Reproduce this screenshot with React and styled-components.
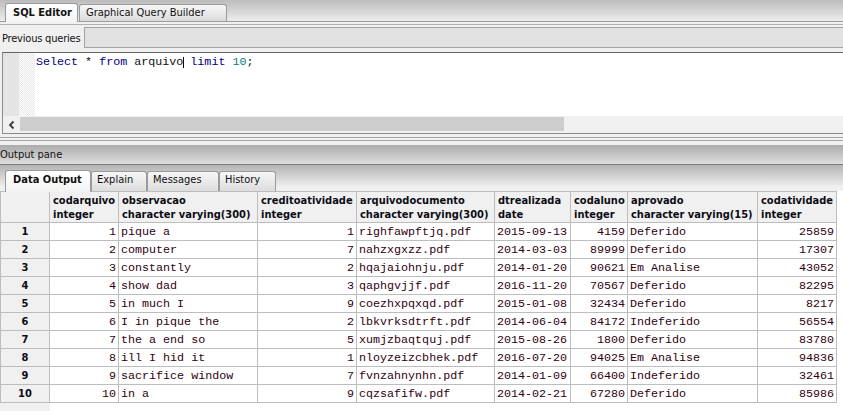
import React from "react";
import styled, { createGlobalStyle } from "styled-components";

const UI = `"DejaVu Sans Condensed", "DejaVu Sans", sans-serif`;
const MONO = `"Liberation Mono", "Courier New", monospace`;

const GlobalStyle = createGlobalStyle`
  html, body { margin: 0; padding: 0; background: #fff; overflow: hidden; }
  body { font-family: ${UI}; font-size: 11px; color: #000; }
`;

const Window = styled.div`
  width: 843px;
  height: 411px;
  display: flex;
  flex-direction: column;
  background: #f0f0f0;
  overflow: hidden;
`;

const TabBar = styled.div`
  flex: none;
  box-sizing: border-box;
  height: ${(p) => p.$h}px;
  display: flex;
  align-items: flex-end;
  gap: ${(p) => p.$gap}px;
  padding-left: 5px;
  background: ${(p) => p.$bg};
`;

const Tab = styled.div`
  box-sizing: border-box;
  flex: none;
  width: ${(p) => p.$w}px;
  height: ${(p) => p.$h}px;
  margin-bottom: ${(p) => (p.$active ? -1 : 0)}px;
  position: relative;
  z-index: ${(p) => (p.$active ? 2 : 1)};
  border: 1px solid #9a9a9a;
  border-bottom: none;
  border-radius: 3px 3px 0 0;
  background: ${(p) =>
    p.$active
      ? "linear-gradient(#ffffff, #f3f3f3)"
      : "linear-gradient(#f7f7f7, #dcdcdc)"};
  font-weight: ${(p) => (p.$active ? 700 : 400)};
  padding-left: ${(p) => p.$pad}px;
  line-height: ${(p) => p.$lh}px;
  white-space: nowrap;
  color: #111;
`;

const PanelTop = styled.div`
  flex: none;
  height: 6px;
  box-sizing: border-box;
  border-top: 1px solid #9c9c9c;
  padding-top: 2px;
`;

const PanelInnerLine = styled.div`
  border-top: 1px solid #b0b0b0;
`;

const QueryRow = styled.div`
  flex: none;
  height: 21px;
  display: flex;
`;

const QueryLabel = styled.div`
  width: 84px;
  flex: none;
  padding: 2px 0 0 2px;
  box-sizing: border-box;
  line-height: 19px;
  letter-spacing: -0.2px;
  white-space: nowrap;
  color: #111;
`;

const QueryCombo = styled.div`
  flex: 1;
  box-sizing: border-box;
  border: 1px solid #a4a4a4;
  border-right: none;
  background: #e1e1e1;
`;

const Editor = styled.div`
  flex: none;
  height: 82px;
  box-sizing: border-box;
  margin: 4px 0 0 2px;
  border-top: 1px solid #656565;
  border-left: 1px solid #8c8c8c;
  border-bottom: 1px solid #8a8a8a;
  background: #fff;
  display: flex;
  flex-direction: column;
`;

const EditorBody = styled.div`
  flex: 1;
  display: flex;
`;

const Gutter = styled.div`
  width: 16px;
  flex: none;
  background: #e4e4e4;
`;

const FoldMargin = styled.div`
  width: 16px;
  flex: none;
  background-color: #fff;
  background-image: repeating-conic-gradient(#e8e8e8 0 25%, #ffffff 0 50%);
  background-size: 2px 2px;
`;

const Code = styled.div`
  flex: 1;
  padding: 2px 0 0 1px;
  font-family: ${MONO};
  font-size: 11.7px;
  line-height: 14px;
  white-space: pre;
  color: #101010;
`;

const Token = styled.span`
  color: ${(p) => p.$c};
`;

const Caret = styled.span`
  display: inline-block;
  width: 0;
  height: 11px;
  border-left: 1px solid #000;
  margin-right: -1px;
  vertical-align: -3px;
`;

const HScroll = styled.div`
  flex: none;
  height: 17px;
  display: flex;
  background: #f0f0f0;
`;

const ScrollButton = styled.div`
  width: 17px;
  flex: none;
  display: flex;
  align-items: center;
  justify-content: center;
`;

const ScrollThumb = styled.div`
  width: 544px;
  flex: none;
  margin: 1px 0 2px;
  background: #cdcdcd;
`;

const Splitter = styled.div`
  flex: none;
  height: 11px;
  background: linear-gradient(
    to bottom,
    #f0f0f0 0 3px,
    #a6a6a6 3px 4px,
    #f0f0f0 4px 6px,
    #a6a6a6 6px 7px,
    #f0f0f0 7px
  );
`;

const OutputHeader = styled.div`
  flex: none;
  height: 20px;
  box-sizing: border-box;
  border-bottom: 1px solid #7a7a7a;
  background: linear-gradient(#ababab, #dedede);
  line-height: 19px;
  white-space: nowrap;
  color: #111;
`;

const DataGrid = styled.div`
  flex: 1;
  display: grid;
  grid-template-columns: ${(p) => p.$cols.map((c) => c + "px").join(" ")};
  grid-template-rows: 32px repeat(10, 18px) 1fr;
  background: #fff;
`;

const HeaderCell = styled.div`
  box-sizing: border-box;
  background: #f0f0f0;
  border-top: 1px solid #bdbdbd;
  border-right: 1px solid #bdbdbd;
  border-bottom: 1px solid #bdbdbd;
  border-left: ${(p) => (p.$first ? "1px solid #bdbdbd" : "none")};
  padding: 2px 0 0 3px;
  font-weight: 700;
  line-height: 13.5px;
  white-space: nowrap;
  overflow: hidden;
  color: #0c0c14;
`;

const RowHead = styled.div`
  box-sizing: border-box;
  background: #f0f0f0;
  border-left: 1px solid #bdbdbd;
  border-right: 1px solid #bdbdbd;
  border-bottom: 1px solid #bdbdbd;
  font-weight: 700;
  text-align: center;
  line-height: 17px;
  color: #0c0c14;
`;

const Cell = styled.div`
  box-sizing: border-box;
  border-right: 1px solid #bdbdbd;
  border-bottom: 1px solid #bdbdbd;
  padding: 1px 2px 0 2px;
  text-align: ${(p) => (p.$num ? "right" : "left")};
  font-family: ${MONO};
  font-size: 11.7px;
  line-height: 16px;
  white-space: nowrap;
  overflow: hidden;
  color: #300010;
`;

const Filler = styled.div`
  grid-column: 1;
  background: #f0f0f0;
`;

const COLS = [50, 69, 139, 99, 138, 76, 57, 130, 79];

const HEADERS = [
  ["codarquivo", "integer"],
  ["observacao", "character varying(300)"],
  ["creditoatividade", "integer"],
  ["arquivodocumento", "character varying(300)"],
  ["dtrealizada", "date"],
  ["codaluno", "integer"],
  ["aprovado", "character varying(15)"],
  ["codatividade", "integer"],
];

const NUMERIC = [true, false, true, false, false, true, false, true];

const ROWS = [
  [1, "pique a", 1, "righfawpftjq.pdf", "2015-09-13", 4159, "Deferido", 25859],
  [2, "computer", 7, "nahzxgxzz.pdf", "2014-03-03", 89999, "Deferido", 17307],
  [3, "constantly", 2, "hqajaiohnju.pdf", "2014-01-20", 90621, "Em Analise", 43052],
  [4, "show dad", 3, "qaphgvjjf.pdf", "2016-11-20", 70567, "Deferido", 82295],
  [5, "in much I", 9, "coezhxpqxqd.pdf", "2015-01-08", 32434, "Deferido", 8217],
  [6, "I in pique the", 2, "lbkvrksdtrft.pdf", "2014-06-04", 84172, "Indeferido", 56554],
  [7, "the a end so", 5, "xumjzbaqtquj.pdf", "2015-08-26", 1800, "Deferido", 83780],
  [8, "ill I hid it", 1, "nloyzeizcbhek.pdf", "2016-07-20", 94025, "Em Analise", 94836],
  [9, "sacrifice window", 7, "fvnzahnynhn.pdf", "2014-01-09", 66400, "Indeferido", 32461],
  [10, "in a", 9, "cqzsafifw.pdf", "2014-02-21", 67280, "Deferido", 85986],
];

const KW = "#00007f";

function ChevronLeft() {
  return (
    <svg width="8" height="10" viewBox="0 0 8 10">
      <polyline
        points="5.5,1.5 2,5 5.5,8.5"
        fill="none"
        stroke="#3a3a3a"
        strokeWidth="1.8"
      />
    </svg>
  );
}

export default function App() {
  return (
    <>
      <GlobalStyle />
      <Window>
        <TabBar $h={21} $gap={1} $bg="linear-gradient(#bcbcbc, #ededed)">
          <Tab $active $w={73} $h={19} $pad={7} $lh={17}>
            SQL Editor
          </Tab>
          <Tab $w={148} $h={17} $pad={6} $lh={16}>
            Graphical Query Builder
          </Tab>
        </TabBar>
        <PanelTop>
          <PanelInnerLine />
        </PanelTop>
        <QueryRow>
          <QueryLabel>Previous queries</QueryLabel>
          <QueryCombo />
        </QueryRow>
        <Editor>
          <EditorBody>
            <Gutter />
            <FoldMargin />
            <Code>
              <Token $c={KW}>Select</Token> * <Token $c={KW}>from</Token>{" "}
              arquivo
              <Caret /> <Token $c={KW}>limit</Token>{" "}
              <Token $c="#007f7f">10</Token>;
            </Code>
          </EditorBody>
          <HScroll>
            <ScrollButton>
              <ChevronLeft />
            </ScrollButton>
            <ScrollThumb />
          </HScroll>
        </Editor>
        <Splitter />
        <OutputHeader>Output pane</OutputHeader>
        <TabBar $h={26} $gap={0} $bg="linear-gradient(#b4b4b4, #f0f0f0 85%)">
          <Tab $active $w={86} $h={22} $pad={7} $lh={17}>
            Data Output
          </Tab>
          <Tab $w={56} $h={20} $pad={5} $lh={16}>
            Explain
          </Tab>
          <Tab $w={72} $h={20} $pad={5} $lh={16}>
            Messages
          </Tab>
          <Tab $w={57} $h={20} $pad={5} $lh={16}>
            History
          </Tab>
        </TabBar>
        <DataGrid $cols={COLS}>
          <HeaderCell $first />
          {HEADERS.map(([name, type]) => (
            <HeaderCell key={name}>
              {name}
              <br />
              {type}
            </HeaderCell>
          ))}
          {ROWS.map((row, i) => (
            <React.Fragment key={i}>
              <RowHead>{i + 1}</RowHead>
              {row.map((v, j) => (
                <Cell key={j} $num={NUMERIC[j]}>
                  {v}
                </Cell>
              ))}
            </React.Fragment>
          ))}
          <Filler />
        </DataGrid>
      </Window>
    </>
  );
}
